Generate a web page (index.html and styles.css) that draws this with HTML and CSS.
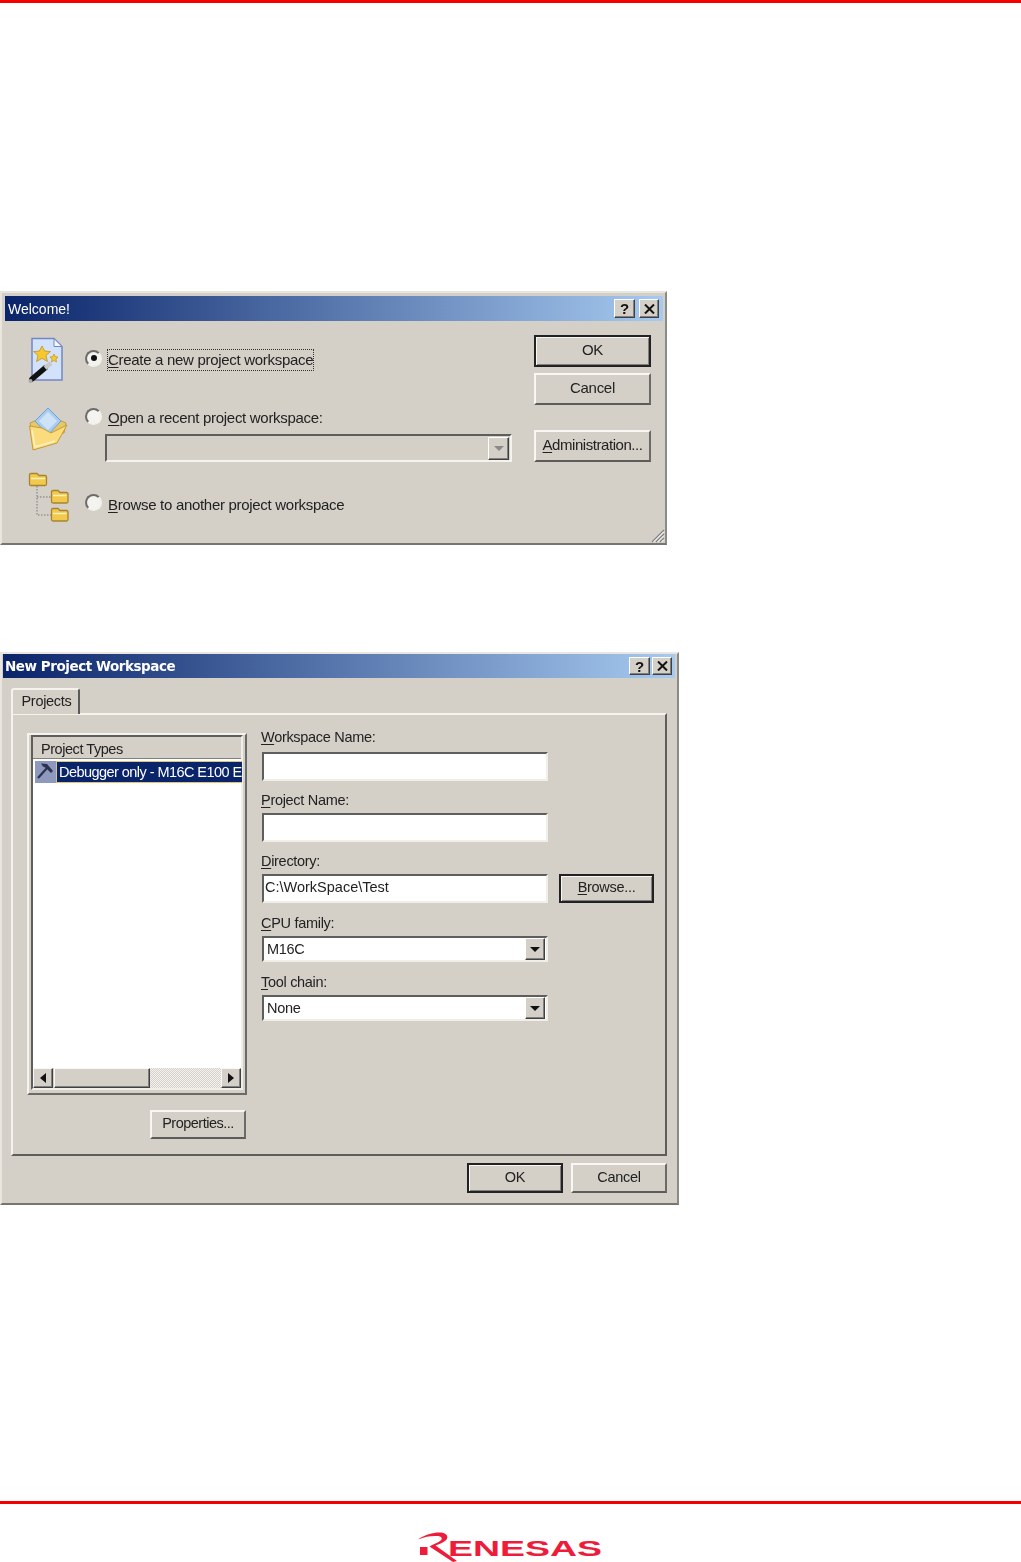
FILE: index.html
```html
<!DOCTYPE html>
<html lang="en">
<head>
<meta charset="utf-8">
<title>Project workspace dialogs</title>
<link rel="stylesheet" href="styles.css">
</head>
<body>
<div class="rule"></div>

<section class="dialog welcome">
  <header class="titlebar">
    <span class="title">Welcome!</span>
    <div class="caption-buttons">
      <span class="cap-btn help">?</span>
      <span class="cap-btn"><svg width="11" height="10" viewBox="0 0 11 10"><path d="M1 0.5 L10 9.5 M10 0.5 L1 9.5" stroke="#111" stroke-width="2"/></svg></span>
    </div>
  </header>
  <div class="welcome-body">
    <div class="options">
      <svg class="icon-wizard" width="44" height="46" viewBox="0 0 44 46">
        <path d="M5 1.500 H27 L35 9.500 V43 H5 Z" fill="#d3e2fb" stroke="#7187c4" stroke-width="1.500"/>
        <path d="M27 1.500 V9.500 H35 Z" fill="#f2f6ff" stroke="#7187c4"/>
        <path d="M15 9 L17.600 14 L23.500 14.600 L19 18.400 L20.400 24.500 L15 21.300 L9.600 24.500 L11 18.400 L6.500 14.600 L12.400 14 Z" fill="#f6c82c" stroke="#b88a18" stroke-width=".7"/>
        <path d="M27 17 L28.200 19.600 L31 20 L29 22 L29.500 25 L27 23.500 L24.500 25 L25 22 L23 20 L25.800 19.600 Z" fill="#f6c82c" stroke="#b88a18" stroke-width=".6"/>
        <path d="M5 42 L18 31" stroke="#111" stroke-width="5.500" stroke-linecap="round"/>
        <path d="M18 31 L24 26" stroke="#c9c9c9" stroke-width="4.500"/>
        <circle cx="3.500" cy="44" r="2" fill="#aaa"/>
      </svg>
      <span class="radio checked"></span>
      <label class="option-label"><span class="focus-rect"><u>C</u>reate a new project workspace</span></label>

      <svg class="icon-open" width="44" height="46" viewBox="0 0 44 46">
        <path d="M3 16 L21 8 L25 10 L39 16 L37 26 L6 32 Z" fill="#e6c868" stroke="#c29c3a"/>
        <path d="M21 1 L34 14 L21 28 L8 14 Z" fill="#a9cdf2" stroke="#6f9fd8"/>
        <path d="M21 5 L30 14 L21 23 L12 14 Z" fill="#cfe3f8"/>
        <path d="M2.500 19 L6 43 L30 36 L40 18 L24 26 L15 21 Z" fill="#fbdc7c" stroke="#c99a34"/>
        <path d="M5 23 L8 40 L28 34" fill="none" stroke="#fff3c2" stroke-width="1.500"/>
      </svg>
      <span class="radio radio-open"></span>
      <label class="option-label"><u>O</u>pen a recent project workspace:</label>
      <div class="combo disabled"><span class="combo-btn"><i class="arrow arrow-down muted"></i></span></div>

      <svg class="icon-tree" width="44" height="51" viewBox="0 0 44 51">
        <path d="M10 14 V43 H24 M10 25 H24" fill="none" stroke="#777" stroke-dasharray="1.500 1.500"/>
        <path d="M2.500 3 Q2.500 1.500 4 1.500 H10 L12 3.500 H18 Q19.500 3.500 19.500 5 V12 Q19.500 13.500 18 13.500 H4 Q2.500 13.500 2.500 12 Z" fill="#f2c94f" stroke="#a8842e" stroke-width="1.300"/>
        <path d="M4 6.500 H18" stroke="#fff0b8" stroke-width="1.500"/>
        <path d="M24.500 20 Q24.500 18.500 26 18.500 H31 L33 20.500 H39.500 Q41 20.500 41 22 V29.500 Q41 31 39.500 31 H26 Q24.500 31 24.500 29.500 Z" fill="#f2c94f" stroke="#a8842e" stroke-width="1.300"/>
        <path d="M26 23.500 H39.500" stroke="#fff0b8" stroke-width="1.500"/>
        <path d="M24.500 38 Q24.500 36.500 26 36.500 H31 L33 38.500 H39.500 Q41 38.500 41 40 V47.500 Q41 49 39.500 49 H26 Q24.500 49 24.500 47.500 Z" fill="#f2c94f" stroke="#a8842e" stroke-width="1.300"/>
        <path d="M26 41.500 H39.500" stroke="#fff0b8" stroke-width="1.500"/>
      </svg>
      <span class="radio radio-browse"></span>
      <label class="option-label label-browse"><u>B</u>rowse to another project workspace</label>
    </div>
    <div class="welcome-actions">
      <button class="btn default tall">OK</button>
      <button class="btn tall">Cancel</button>
      <button class="btn tall admin"><u>A</u>dministration...</button>
    </div>
  </div>
  <svg class="grip" width="16" height="16" viewBox="0 0 16 16"><path d="M15 3 L3 15 M15 7 L7 15 M15 11 L11 15" stroke="#808080" stroke-width="1.300"/><path d="M15 4.500 L4.500 15 M15 8.500 L8.500 15 M15 12.500 L12.500 15" stroke="#fff"/></svg>
</section>

<section class="dialog workspace">
  <header class="titlebar">
    <span class="title bold">New Project Workspace</span>
    <div class="caption-buttons tight">
      <span class="cap-btn help">?</span>
      <span class="cap-btn"><svg width="11" height="10" viewBox="0 0 11 10"><path d="M1 0.5 L10 9.5 M10 0.5 L1 9.5" stroke="#111" stroke-width="2"/></svg></span>
    </div>
  </header>
  <div class="tab">Projects</div>
  <div class="panel">
    <div class="list-col">
      <div class="list-frame">
        <div class="list">
          <div class="list-head">Project Types</div>
          <div class="list-rows">
            <div class="list-row">
              <span class="row-icon"><svg width="20" height="20" viewBox="0 0 20 20"><path d="M3 17 L12 7" stroke="#2c3350" stroke-width="2.200"/><path d="M6 2.500 L12 3 L18 10 L16 12 L11 7 L8 5.500 Z" fill="#2c3350"/></svg></span>
              <span class="row-text">Debugger only - M16C E100 E</span>
            </div>
          </div>
          <div class="scrollbar">
            <span class="sb-btn"><i class="arrow arrow-left"></i></span>
            <span class="sb-thumb"></span>
            <span class="sb-track"></span>
            <span class="sb-btn"><i class="arrow arrow-right"></i></span>
          </div>
        </div>
      </div>
      <button class="btn props">Properties...</button>
    </div>
    <div class="form-col">
      <label class="field-label first"><span><u>W</u>orkspace Name:</span></label>
      <div class="field input"></div>
      <label class="field-label"><span><u>P</u>roject Name:</span></label>
      <div class="field input"></div>
      <label class="field-label"><span><u>D</u>irectory:</span></label>
      <div class="dir-row">
        <div class="field input path">C:\WorkSpace\Test</div>
        <button class="btn default browse"><u>B</u>rowse...</button>
      </div>
      <label class="field-label loose"><span><u>C</u>PU family:</span></label>
      <div class="field select">M16C<span class="combo-btn"><i class="arrow arrow-down"></i></span></div>
      <label class="field-label loose"><span><u>T</u>ool chain:</span></label>
      <div class="field select">None<span class="combo-btn"><i class="arrow arrow-down"></i></span></div>
    </div>
  </div>
  <div class="workspace-actions">
    <button class="btn default wide">OK</button>
    <button class="btn wide">Cancel</button>
  </div>
</section>

<footer class="footer">
  <div class="rule"></div>
  <svg class="logo" width="186" height="30" viewBox="0 0 186 30" role="img" aria-label="Renesas">
    <path d="M1 7.500 C8 2 18 0 24 0.500 C31 1 32 6.500 28 9 C25 11 21 12.500 18.500 13.500 L40 29 L36 30 L12.500 14.500 C16 12.500 20 11 23 9 C26 7 25 4.500 21 4 C15 3.500 8 4.500 1 7.500 Z" fill="#ee1c3a"/>
    <rect x="3" y="15" width="7.500" height="8" fill="#ee1c3a"/>
    <text class="logo-text" x="31" y="24" textLength="154" lengthAdjust="spacingAndGlyphs">ENESAS</text>
  </svg>
</footer>
</body>
</html>
```

FILE: styles.css
```css
* { box-sizing: border-box; }

html, body { margin: 0; padding: 0; background: #fff; }

body {
  width: 1021px;
  height: 1562px;
  overflow: hidden;
  display: flex;
  flex-direction: column;
  font-family: "Liberation Sans", Arial, sans-serif;
  font-size: 15px;
  letter-spacing: -.3px;
  color: #222;
}

u { text-underline-offset: 2px; text-decoration-thickness: 1px; }

.rule { height: 3px; background: #f40000; flex: none; }

/* ---- window chrome ---- */
.dialog {
  position: relative;
  flex: none;
  background: #d4d0c8;
  border-style: solid;
  border-width: 2px;
  border-color: #e9e6df #8a8a86 #77756f #e9e6df;
  filter: blur(.3px);
}

.welcome {
  width: 667px;
  height: 254px;
  margin-top: 288px;
  padding: 3px 2px 0 3px;
}

.workspace {
  width: 679px;
  height: 553px;
  margin-top: 107px;
  padding: 0 2px 0 1px;
}

.titlebar {
  height: 25px;
  display: flex;
  align-items: center;
  justify-content: space-between;
  background: linear-gradient(90deg, #0a246a, #a6caf0);
  color: #fff;
  padding-left: 3px;
}

.workspace .titlebar { height: 24px; padding-left: 2px; }

.title { font-size: 14px; letter-spacing: 0; }
.title.bold { font-family: "DejaVu Sans", sans-serif; font-size: 13.5px; font-weight: 700; letter-spacing: -.45px; }

.caption-buttons { display: flex; gap: 4px; padding-right: 4px; }
.caption-buttons.tight { gap: 2px; padding-right: 3px; }

.cap-btn {
  width: 21px;
  height: 19px;
  display: flex;
  align-items: center;
  justify-content: center;
  background: #d4d0c8;
  border: 1px solid;
  border-color: #fff #404040 #404040 #fff;
  box-shadow: inset -1px -1px #808080;
  color: #111;
}
.cap-btn:last-child { width: 20px; }
.tight .cap-btn { height: 18px; }
.help { font-weight: 700; font-size: 15px; }

/* ---- buttons ---- */
.btn {
  display: block;
  padding: 0 0 3px;
  font: inherit;
  letter-spacing: inherit;
  color: #222;
  background: #d4d0c8;
  border: 2px solid;
  border-color: #f8f7f3 #6a6a68 #5c5c5a #f8f7f3;
}
.btn.default {
  border-color: #222;
  box-shadow: inset 1px 1px #f8f7f3, inset -1px -1px #808080;
}
.btn.tall { width: 117px; height: 32px; }
.btn.admin { margin-top: 19px; letter-spacing: -.45px; }

/* ---- welcome dialog ---- */
.welcome-body { display: flex; gap: 22px; padding: 14px 0 0 22px; }

.options {
  width: 485px;
  padding-top: 2px;
  display: grid;
  grid-template-columns: 58px 23px 404px;
  grid-template-rows: 46px 23px 22px 6px 28px 10px 51px;
}

.welcome-actions { display: flex; flex-direction: column; gap: 6px; }

.icon-wizard { grid-area: 1 / 1; display: block; }
.icon-open { grid-area: 3 / 1 / 6 / 2; display: block; margin-top: 1px; }
.icon-tree { grid-area: 7 / 1; display: block; }

.radio {
  grid-column: 2;
  width: 17px;
  height: 17px;
  border-radius: 50%;
  background: #f4f3ef;
  border: 2px solid;
  border-color: #6c6c6a #f2f1ec #f2f1ec #6c6c6a;
  display: flex;
  align-items: center;
  justify-content: center;
}
.radio.checked { grid-row: 1; align-self: center; margin-top: -4px; }
.radio.checked::after { content: ""; width: 6px; height: 6px; border-radius: 50%; background: #111; }
.radio-open { grid-row: 3; align-self: center; margin-top: -2px; }
.radio-browse { grid-row: 7; align-self: center; margin-top: 10px; }

.option-label { grid-column: 3; align-self: center; white-space: nowrap; display: flex; align-items: center; }
.option-label:nth-of-type(1) { grid-row: 1; }
.option-label:nth-of-type(2) { grid-row: 3; }
.label-browse { grid-row: 7; margin-top: 13px; }

.focus-rect { border: 1px dotted #333; margin-left: -1px; height: 22px; line-height: 20px; }

.combo {
  grid-area: 5 / 3;
  margin-left: -3px;
  width: 407px;
  border: 2px solid;
  border-color: #5e5e5c #f4f3ee #f4f3ee #5e5e5c;
  display: flex;
  justify-content: flex-end;
  align-items: center;
  padding-right: 1px;
}

.combo-btn {
  width: 21px;
  height: 23px;
  display: flex;
  align-items: center;
  justify-content: center;
  background: #d4d0c8;
  border: 1px solid;
  border-color: #fff #404040 #404040 #fff;
  box-shadow: inset -1px -1px #808080;
}

.arrow { display: block; width: 0; height: 0; border-style: solid; }
.arrow-down { border-width: 5px 5px 0; border-color: #111 transparent transparent; }
.arrow-down.muted { border-top-color: #8a8a88; }
.arrow-left { border-width: 5px 6px 5px 0; border-color: transparent #111 transparent transparent; }
.arrow-right { border-width: 5px 0 5px 6px; border-color: transparent transparent transparent #111; }

.grip { position: absolute; right: 0; bottom: 0; }

/* ---- new workspace dialog ---- */
.tab {
  position: relative;
  z-index: 1;
  width: 69px;
  height: 26px;
  margin: 10px 0 -1px 8px;
  padding-left: 2px;
  background: #d4d0c8;
  border-style: solid;
  border-width: 2px 2px 0 2px;
  border-color: #f4f3ee #5a5a58 #d4d0c8 #f4f3ee;
  border-radius: 3px 3px 0 0;
  text-align: center;
  line-height: 22px;
  font-size: 14.5px;
}

.panel {
  width: 656px;
  height: 443px;
  margin-left: 8px;
  display: flex;
  border: 2px solid;
  border-color: #f4f3ee #5e5e5c #5e5e5c #f4f3ee;
}

.list-col { width: 234px; padding: 18px 0 0 14px; display: flex; flex-direction: column; }

.list-frame {
  width: 220px;
  height: 362px;
  padding: 0 2px 3px;
  border: 2px solid;
  border-color: #f4f3ee #6a6a68 #6a6a68 #f4f3ee;
}

.list {
  height: 100%;
  display: flex;
  flex-direction: column;
  background: #fff;
  border: 2px solid;
  border-color: #5e5e5c #efeee9 #efeee9 #5e5e5c;
}

.list-head {
  height: 22px;
  flex: none;
  padding-left: 8px;
  line-height: 24px;
  font-size: 14.5px;
  letter-spacing: -.45px;
  background: #d4d0c8;
  border-bottom: 1px solid #808080;
}

.list-rows { flex: 1; padding: 2px 0 0 2px; }
.list-row { display: flex; height: 22px; }
.row-icon { width: 21px; background: #8e99bd; flex: none; }
.row-icon svg { display: block; }
.row-text {
  flex: 1;
  white-space: nowrap;
  background: #0a246a;
  color: #fff;
  padding-left: 2px;
  line-height: 21px;
  font-size: 14.5px;
  letter-spacing: -.55px;
  border: 1px solid #e2c27a;
  border-width: 1px 0 1px 1px;
}

.scrollbar { display: flex; height: 20px; flex: none; background: #d4d0c8; }

.sb-btn {
  width: 20px;
  display: flex;
  align-items: center;
  justify-content: center;
  background: #d4d0c8;
  border: 1px solid;
  border-color: #f8f7f3 #404040 #404040 #f8f7f3;
  box-shadow: inset -1px -1px #808080;
}

.sb-thumb {
  width: 96px;
  margin-left: 1px;
  background: #d4d0c8;
  border: 1px solid;
  border-color: #f8f7f3 #404040 #404040 #f8f7f3;
  box-shadow: inset -1px -1px #808080;
}

.sb-track {
  flex: 1;
  background-color: #fff;
  background-image: conic-gradient(#d4d0c8 25%, #f4f3ef 0 50%, #d4d0c8 0 75%, #f4f3ef 0);
  background-size: 2px 2px;
}

.btn.props { width: 96px; height: 29px; margin: 15px 0 0 123px; font-size: 14.5px; letter-spacing: -.5px; }

.form-col { width: 393px; padding: 5px 0 0 0; margin-left: 14px; }

.field-label { display: flex; align-items: center; height: 32px; padding-top: 6px; font-size: 14.5px; }
.field-label.first { padding: 4px 0 2px; }
.field-label.loose { height: 33px; padding-top: 7px; }

.field {
  width: 286px;
  height: 29px;
  background: #fff;
  border: 2px solid;
  border-color: #5e5e5c #efeee9 #efeee9 #5e5e5c;
  display: flex;
  align-items: center;
  padding-left: 2px;
  font-size: 14.5px;
  margin-left: 1px;
}
.field.path { padding: 0 0 3px 1px; letter-spacing: 0; }

.field.select { height: 26px; padding: 0 1px 0 3px; justify-content: space-between; }
.field.select .combo-btn { height: 22px; width: 20px; }

.dir-row { display: flex; gap: 11px; align-items: flex-start; }
.btn.browse { width: 95px; height: 29px; font-size: 14.5px; }

.workspace-actions { width: 656px; margin: 7px 0 0 8px; display: flex; justify-content: flex-end; gap: 8px; }
.btn.wide { width: 96px; height: 30px; font-size: 14.5px; }

/* ---- footer ---- */
.footer { margin-top: auto; height: 61px; flex: none; }
.logo { display: block; margin: 28px 0 0 417px; }
.logo-text { font-family: "Liberation Sans", Arial, sans-serif; font-size: 22px; font-weight: 700; letter-spacing: 0; fill: #ee1c3a; }
```
